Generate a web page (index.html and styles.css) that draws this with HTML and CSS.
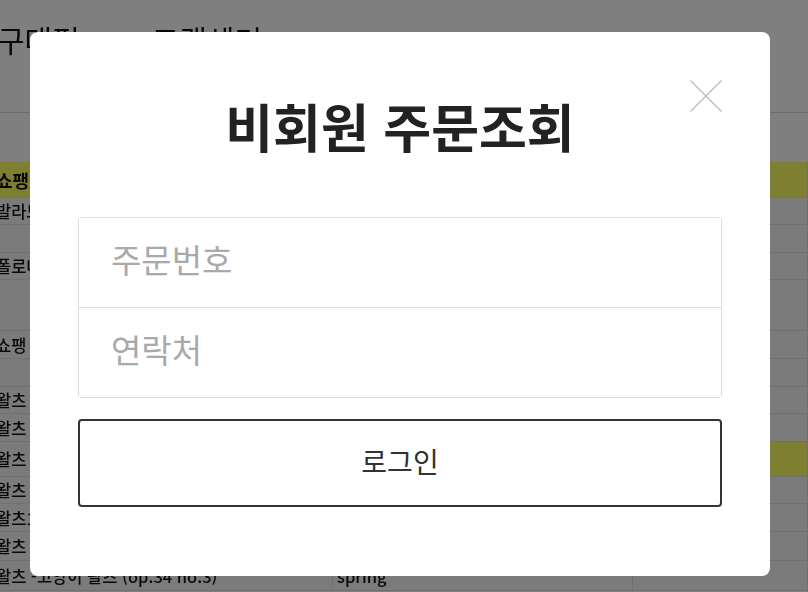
FILE: index.html
```html
<!DOCTYPE html>
<html lang="ko">
<head>
<meta charset="utf-8">
<title>비회원 주문조회</title>
<link rel="stylesheet" href="styles.css">
</head>
<body>
<div class="page">
  <header class="top">
    <span class="nav-item">구매평</span>
    <span class="nav-item">고객센터</span>
  </header>
  <div class="table">
    <div class="row h36 hl"><div class="cell bold big">쇼팽</div><div class="cell"></div><div class="cell"></div></div>
    <div class="row h27"><div class="cell">발라드 제1번 G단조</div><div class="cell"></div><div class="cell"></div></div>
    <div class="row h28"><div class="cell"></div><div class="cell"></div><div class="cell"></div></div>
    <div class="row h27"><div class="cell">폴로네즈 제6번</div><div class="cell"></div><div class="cell"></div></div>
    <div class="row h51"><div class="cell"></div><div class="cell"></div><div class="cell"></div></div>
    <div class="row h28"><div class="cell">쇼팽 - 야상곡</div><div class="cell"></div><div class="cell"></div></div>
    <div class="row h28"><div class="cell"></div><div class="cell"></div><div class="cell"></div></div>
    <div class="row h27"><div class="cell">왈츠 - 화려한 대원무곡</div><div class="cell"></div><div class="cell"></div></div>
    <div class="row h28"><div class="cell">왈츠 7번</div><div class="cell"></div><div class="cell"></div></div>
    <div class="row h35"><div class="cell">왈츠 9번 이별의 왈츠</div><div class="cell"></div><div class="cell hl"></div></div>
    <div class="row h27"><div class="cell">왈츠 - 강아지 왈츠</div><div class="cell"></div><div class="cell"></div></div>
    <div class="row h28"><div class="cell">왈츠11번</div><div class="cell"></div><div class="cell"></div></div>
    <div class="row h29"><div class="cell">왈츠 - 작은 왈츠</div><div class="cell"></div><div class="cell"></div></div>
    <div class="row h30"><div class="cell">왈츠 -고양이 왈츠 (op.34 no.3)</div><div class="cell">spring</div><div class="cell"></div></div>
  </div>
</div>

<div class="overlay"></div>

<div class="modal" role="dialog" aria-label="비회원 주문조회">
  <button class="close" type="button" aria-label="닫기">
    <svg width="32" height="32" viewBox="0 0 32 32"><path d="M0.5 0.5 L31.5 31.5 M31.5 0.5 L0.5 31.5" stroke="#bdbdbd" stroke-width="1.4" fill="none"/></svg>
  </button>
  <h1 class="title">비회원 주문조회</h1>
  <div class="fields">
    <input class="field" type="text" placeholder="주문번호">
    <input class="field field-second" type="text" placeholder="연락처">
  </div>
  <button class="login" type="button">로그인</button>
</div>
</body>
</html>
```

FILE: styles.css
```css
html, body {
  margin: 0;
  padding: 0;
  width: 808px;
  height: 592px;
  overflow: hidden;
  background: #fff;
  font-family: "Noto Sans CJK KR", "Noto Sans", sans-serif;
}

.page {
  filter: blur(0.7px);
  color: #111;
}

.top {
  height: 113px;
  border-bottom: 1px solid #d6d6d6;
  display: flex;
  gap: 72px;
  padding: 20px 0 0 0;
  margin-left: -3px;
  box-sizing: border-box;
  font-size: 30px;
  line-height: 1.3;
  color: #111;
}

.table {
  margin-top: 49px;
  margin-left: -8px;
  background: #f6f6f6;
}

.row {
  display: grid;
  grid-template-columns: 341px 300px 1fr;
  border-bottom: 1px solid #e0e0e0;
  box-sizing: border-box;
}

.cell {
  border-right: 1px solid #e0e0e0;
  font-size: 16.5px;
  font-weight: 500;
  display: flex;
  align-items: center;
  white-space: nowrap;
  overflow: hidden;
  padding-left: 4px;
}

.row.hl, .cell.hl {
  background: #ffff62;
}

.bold { font-weight: 700; }
.big { font-size: 18px; }

.h27 { height: 27px; }
.h28 { height: 28px; }
.h29 { height: 29px; }
.h30 { height: 30px; }
.h35 { height: 35px; }
.h36 { height: 36px; }
.h51 { height: 51px; }

.overlay {
  position: fixed;
  inset: 0;
  background: rgba(0, 0, 0, 0.5);
}

.modal {
  position: fixed;
  top: 32px;
  left: 30px;
  width: 740px;
  height: 544px;
  box-sizing: border-box;
  background: #fff;
  border-radius: 8px;
  padding: 68px 48px 0;
  display: flex;
  flex-direction: column;
}

.close {
  position: absolute;
  top: 48px;
  right: 48px;
  width: 32px;
  height: 32px;
  padding: 0;
  border: 0;
  background: none;
  display: block;
}

.close svg { display: block; }

.title {
  margin: 0;
  font-size: 52px;
  line-height: 52px;
  font-weight: 700;
  color: #222;
  text-align: center;
  letter-spacing: 0;
}

.fields {
  margin-top: 65px;
  border: 1px solid #dcdcdc;
  border-radius: 4px;
  display: flex;
  flex-direction: column;
  overflow: hidden;
}

.field {
  display: block;
  width: 100%;
  height: 89px;
  box-sizing: border-box;
  border: 0;
  margin: 0;
  padding: 0 32px 7px;
  font-family: "Noto Sans CJK KR", "Noto Sans", sans-serif;
  font-size: 33px;
  color: #333;
  background: #fff;
  outline: none;
}

.field::placeholder {
  color: #a9a9a9;
}

.field-second {
  border-top: 1px solid #dcdcdc;
  height: 90px;
}

.login {
  margin-top: 21px;
  width: 100%;
  height: 88px;
  box-sizing: border-box;
  border: 2px solid #333;
  border-radius: 4px;
  background: #fff;
  font-family: "Noto Sans CJK KR", "Noto Sans", sans-serif;
  font-size: 28px;
  color: #333;
  padding: 0 0 4px;
}
```
